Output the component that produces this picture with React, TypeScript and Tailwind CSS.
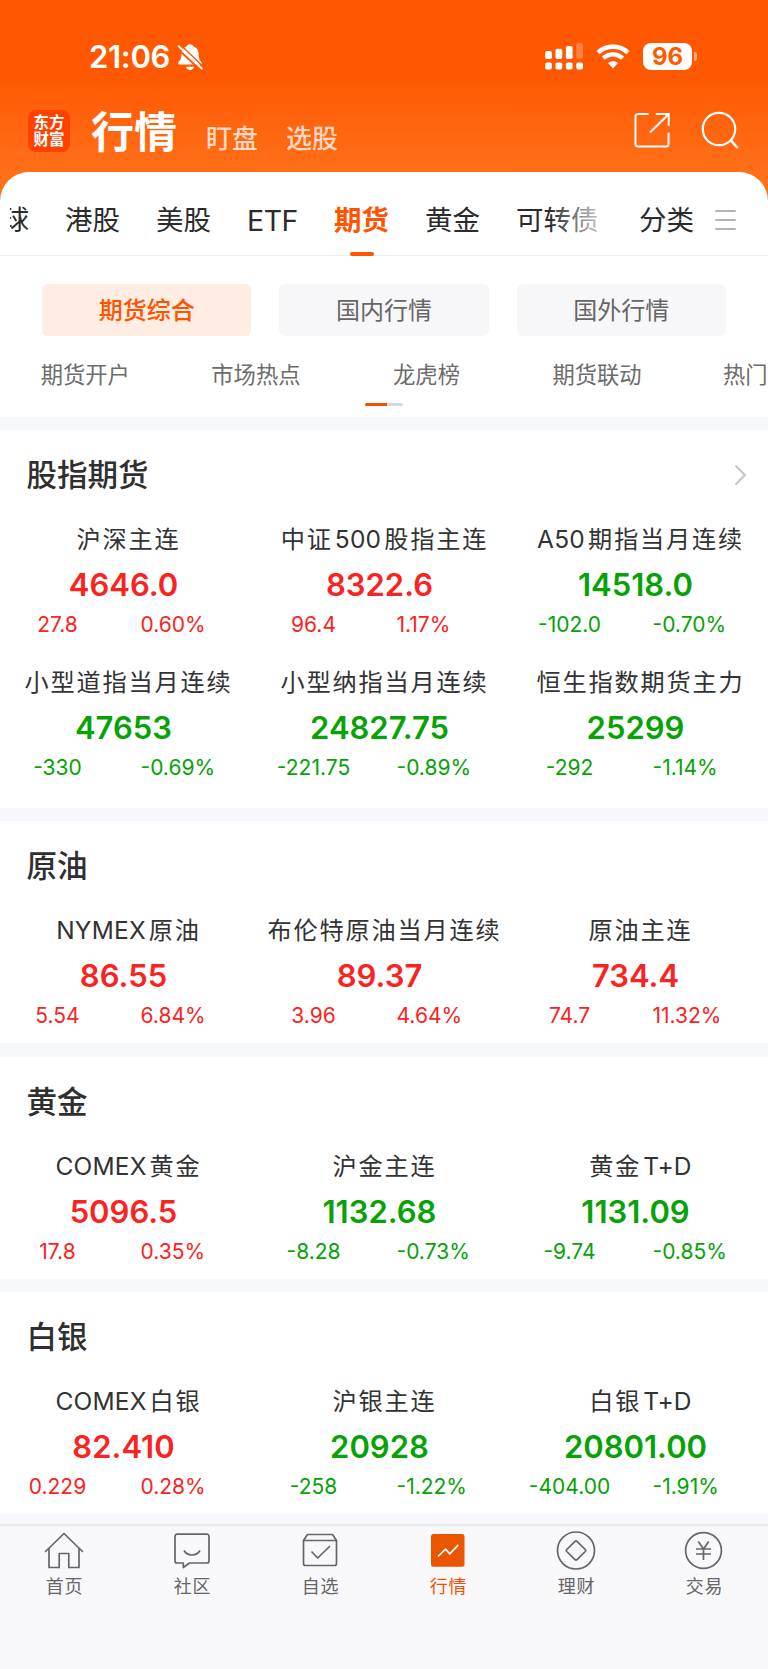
import React from "react";

type Quote = {
  name: string;
  price: string;
  change: string;
  percent: string;
};

type Section = {
  title: string;
  more?: boolean;
  quotes: Quote[];
};

const sections: Section[] = [
  {
    title: "股指期货",
    more: true,
    quotes: [
      { name: "沪深主连", price: "4646.0", change: "27.8", percent: "0.60%" },
      { name: "中证500股指主连", price: "8322.6", change: "96.4", percent: "1.17%" },
      { name: "A50期指当月连续", price: "14518.0", change: "-102.0", percent: "-0.70%" },
      { name: "小型道指当月连续", price: "47653", change: "-330", percent: "-0.69%" },
      { name: "小型纳指当月连续", price: "24827.75", change: "-221.75", percent: "-0.89%" },
      { name: "恒生指数期货主力", price: "25299", change: "-292", percent: "-1.14%" },
    ],
  },
  {
    title: "原油",
    quotes: [
      { name: "NYMEX原油", price: "86.55", change: "5.54", percent: "6.84%" },
      { name: "布伦特原油当月连续", price: "89.37", change: "3.96", percent: "4.64%" },
      { name: "原油主连", price: "734.4", change: "74.7", percent: "11.32%" },
    ],
  },
  {
    title: "黄金",
    quotes: [
      { name: "COMEX黄金", price: "5096.5", change: "17.8", percent: "0.35%" },
      { name: "沪金主连", price: "1132.68", change: "-8.28", percent: "-0.73%" },
      { name: "黄金T+D", price: "1131.09", change: "-9.74", percent: "-0.85%" },
    ],
  },
  {
    title: "白银",
    quotes: [
      { name: "COMEX白银", price: "82.410", change: "0.229", percent: "0.28%" },
      { name: "沪银主连", price: "20928", change: "-258", percent: "-1.22%" },
      { name: "白银T+D", price: "20801.00", change: "-404.00", percent: "-1.91%" },
    ],
  },
];

function StatusBar() {
  return (
    <div className="flex h-[57px] shrink-0 items-center pl-[89px] pr-[71px] text-white mt-[28px]">
      <span className="text-[31px] leading-none font-semibold tracking-[-0.3px]">21:06</span>
      <svg className="ml-[7px] h-[28px] w-[26px]" viewBox="0 0 26 28">
        <path
          d="M13 1.2c1.9 0 3.1 1 3.5 2.3 3.600 1.200 5 4.300 5.100 7.700.1 4.300 1 6 2.600 7.600 1.100 1.100.7 2.700-.9 2.700H2.700c-1.600 0-2-1.600-.9-2.700 1.600-1.600 2.500-3.300 2.600-7.600.1-3.400 1.500-6.500 5.100-7.700C9.900 2.200 11.100 1.200 13 1.200z"
          fill="#fff"
        />
        <path d="M9 23.700h8c-.3 1.900-1.900 3.200-4 3.200s-3.700-1.300-4-3.200z" fill="#fff" />
        <path d="M0 5.200 25 28.500" stroke="#ff5a01" strokeWidth="2" />
        <path d="M1.700 3.200 24.700 25.500" stroke="#fff" strokeWidth="1.900" strokeLinecap="round" />
        <path d="M3.500 1.700 26 23.500" stroke="#ff5a01" strokeWidth="1.300" />
      </svg>
      <div className="ml-auto flex items-center">
        <svg className="h-[27px] w-[39px]" viewBox="0 0 39 27" fill="#fff">
          <rect x="0.200" y="8" width="6.700" height="8" rx="1.800" />
          <rect x="10.500" y="5.800" width="6.700" height="10.200" rx="1.800" />
          <rect x="20.900" y="3" width="6.700" height="13" rx="1.800" />
          <rect x="31.300" y="0" width="6.700" height="16" rx="1.800" opacity="0.25" />
          <rect x="0.200" y="19.400" width="6.700" height="7.200" rx="1.800" />
          <rect x="10.500" y="19.400" width="6.700" height="7.200" rx="1.800" />
          <rect x="20.900" y="19.400" width="6.700" height="7.200" rx="1.800" />
          <rect x="31.300" y="19.400" width="6.700" height="7.200" rx="1.800" />
        </svg>
        <svg className="ml-[12px] h-[25px] w-[34px]" viewBox="0 0 34 25">
          <path d="M2 8.600c8.500-8 21.500-8 30 0" fill="none" stroke="#fff" strokeWidth="4.600" />
          <path d="M7.300 14.200c5.600-5 13.800-5 19.400 0" fill="none" stroke="#fff" strokeWidth="4.400" />
          <path d="M17 24.400l-5-5.300c2.800-2.600 7.200-2.600 10 0z" fill="#fff" />
        </svg>
        <div className="ml-[13px] flex h-[27px] w-[49px] items-center justify-center rounded-[8px] bg-white text-[24px] leading-none font-bold text-[#ff5a01]">
          96
        </div>
        <div className="ml-[1.500px] h-[9px] w-[3.500px] rounded-r-full bg-white/50" />
      </div>
    </div>
  );
}

function Header() {
  return (
    <div className="flex h-[86px] items-start pl-[28px] pr-[29px] pt-[24px] text-white">
      <div className="mt-[1px] flex h-[42px] w-[42px] flex-col items-center justify-center rounded-[8px] bg-[#ff4100] text-[15.500px] leading-[17px] font-bold">
        <span>东方</span>
        <span>财富</span>
      </div>
      <span className="ml-[21px] text-[43px] leading-[46px] font-bold">行情</span>
      <span className="ml-[29px] mt-[14px] text-[26px] leading-[32px] font-medium text-white/75">盯盘</span>
      <span className="ml-[28px] mt-[14px] text-[26px] leading-[32px] font-medium text-white/75">选股</span>
      <svg className="ml-auto mt-[2px] h-[38px] w-[38px]" viewBox="0 0 38 38" fill="none" stroke="#fff" strokeWidth="2">
        <path d="M15.500 3H5a2.500 2.500 0 0 0-2.500 2.500v27.500a2.500 2.500 0 0 0 2.500 2.500h28a2.500 2.500 0 0 0 2.500-2.500V21.800" />
        <path d="M22.800 3h12.900v11.800M35.500 3.200 17 21.500" />
      </svg>
      <svg className="ml-[30px] mt-[2px] h-[38px] w-[38px]" viewBox="0 0 38 38" fill="none" stroke="#fff" strokeWidth="2.200">
        <circle cx="18" cy="18" r="16.200" />
        <path d="M29.500 29l7.200 8" strokeWidth="2.600" />
      </svg>
    </div>
  );
}

function CategoryTabs() {
  return (
    <div className="flex h-[84px] border-b border-[#eeeef0] pl-[10px]">
      <div className="relative flex h-[84px] w-[608px] gap-[36px] overflow-hidden text-[27.500px] leading-[97px] whitespace-nowrap text-[#2b2b2b]">
        <span className="-ml-[8.500px]">球</span>
        <span>港股</span>
        <span>美股</span>
        <span className="w-[51px] text-[28.500px] tracking-[-0.5px]">ETF</span>
        <div className="flex flex-col items-center">
          <span className="h-[80px] font-bold text-[#ff5300]">期货</span>
          <div className="h-[4px] w-[24px] rounded-full bg-[#ff5300]" />
        </div>
        <span>黄金</span>
        <span>可转债</span>
        <div className="absolute top-0 right-0 h-[82px] w-[68px] bg-linear-to-r from-white/0 to-white" />
      </div>
      <span className="ml-[21px] text-[27.500px] leading-[97px] text-[#2b2b2b]">分类</span>
      <div className="ml-[21px] mt-[38px] flex flex-col gap-[6.500px]">
        <div className="h-[2.500px] w-[21px] rounded-full bg-[#b4b4b4]" />
        <div className="h-[2.500px] w-[21px] rounded-full bg-[#b4b4b4]" />
        <div className="h-[2.500px] w-[21px] rounded-full bg-[#b4b4b4]" />
      </div>
    </div>
  );
}

function Filters() {
  return (
    <div className="h-[161px] overflow-hidden pt-[28px]">
      <div className="grid grid-cols-3 gap-[28px] px-[42px] text-center text-[24px] leading-[54px] text-[#666]">
        <div className="h-[52px] rounded-[6px] bg-[#ffede4] font-medium text-[#ff5300]">期货综合</div>
        <div className="h-[52px] rounded-[6px] bg-[#f7f7fa]">国内行情</div>
        <div className="h-[52px] rounded-[6px] bg-[#f7f7fa]">国外行情</div>
      </div>
      <div className="flex pt-[24px] text-center text-[22.300px] leading-[30px] whitespace-nowrap text-[#6c6c6c]">
        <span className="w-[170.600px] shrink-0">期货开户</span>
        <span className="w-[170.600px] shrink-0">市场热点</span>
        <span className="w-[170.600px] shrink-0">龙虎榜</span>
        <span className="w-[170.600px] shrink-0">期货联动</span>
        <span className="w-[170.600px] shrink-0">热门品种</span>
      </div>
      <div className="mt-[13px] mx-auto flex h-[3px] w-[38px] overflow-hidden rounded-full bg-[#d5d8de]">
        <div className="w-[21.500px] bg-[#f35000]" />
      </div>
    </div>
  );
}

function QuoteName({ name }: { name: string }) {
  const parts = name.match(/[A-Z0-9+]+|[^A-Z0-9+]+/g) ?? [];
  return (
    <div className="flex h-[41px] items-center justify-center pl-[1px] whitespace-nowrap text-[24px] leading-[41px] text-[#333]">
      {parts.map((part) =>
        /[A-Z0-9]/.test(part) ? (
          <span key={part} className="mr-[3px] ml-[2px] text-[24.500px] tracking-[0.2px] first:ml-0 last:mr-0">{part}</span>
        ) : (
          <span key={part} className="text-[24.200px] tracking-[1.800px]">{part}</span>
        ),
      )}
    </div>
  );
}

function QuoteCell({ quote }: { quote: Quote }) {
  const color = quote.change.startsWith("-") ? "text-[#06a206]" : "text-[#fb2222]";
  return (
    <div className={color}>
      <QuoteName name={quote.name} />
      <div className="h-[49px] pr-[9px] text-center text-[31px] leading-[49px] font-semibold">{quote.price}</div>
      <div className="flex h-[30px] text-[21px] leading-[32px]">
        <span className="w-[115px] text-center">{quote.change}</span>
        <span className="pl-[25.500px]">{quote.percent}</span>
      </div>
    </div>
  );
}

function QuoteSection({ section }: { section: Section }) {
  return (
    <section className={section.more ? "h-[377.500px] bg-white" : "h-[222px] bg-white"}>
      <div className="flex h-[89px] items-center justify-between pl-[26.500px] pr-[21px]">
        <h2 className="text-[30.500px] leading-[89px] font-medium text-[#2f2f2f]">{section.title}</h2>
        {section.more && (
          <svg className="h-[22px] w-[13px]" viewBox="0 0 13 22" fill="none" stroke="#c9c9c9" strokeWidth="2.200">
            <path d="M1.500 1.500 11 11 1.500 20.500" />
          </svg>
        )}
      </div>
      <div className="grid grid-cols-3 gap-y-[23px]">
        {section.quotes.map((quote) => (
          <QuoteCell key={quote.name} quote={quote} />
        ))}
      </div>
    </section>
  );
}

const navItems = [
  {
    label: "首页",
    icon: (
      <path d="M1 21 20 2.500 39 21M5 17.500V36.500H15.200V22.500H24.800V36.500H35V17.500" />
    ),
  },
  {
    label: "社区",
    icon: (
      <>
        <path d="M5 3.200h30a2 2 0 0 1 2 2V30a2 2 0 0 1-2 2H17.500L11.300 36.500V32H5a2 2 0 0 1-2-2V5.200a2 2 0 0 1 2-2z" />
        <path d="M12 19.500c3.500 6 12.500 6 16 0" />
      </>
    ),
  },
  {
    label: "自选",
    icon: (
      <>
        <path d="M3.500 9.500 7.500 3.500h25L36.500 9.500V32.500a2 2 0 0 1-2 2h-29a2 2 0 0 1-2-2zM3.500 9.500h33" />
        <path d="M11.500 20.500l6.200 6.500L30 15" />
      </>
    ),
  },
  {
    label: "行情",
    active: true,
    icon: (
      <>
        <rect x="3" y="3" width="33.500" height="32.800" rx="2.500" fill="#eb5500" stroke="none" />
        <path d="M10 25.500l7.500-7.300 4.300 4.600 8.500-9" stroke="#fff" />
      </>
    ),
  },
  {
    label: "理财",
    icon: (
      <>
        <circle cx="20" cy="19.500" r="18.500" />
        <path d="M19 10.300a1.400 1.400 0 0 1 2 0l8.300 8.200a1.400 1.400 0 0 1 0 2L21 28.700a1.400 1.400 0 0 1-2 0l-8.300-8.200a1.400 1.400 0 0 1 0-2z" />
      </>
    ),
  },
  {
    label: "交易",
    icon: (
      <>
        <circle cx="19.500" cy="19.500" r="17.900" />
        <path d="M14.300 10.500l5.200 7.500 5.200-7.500M12 18h15M12 23h15M19.500 18v11" />
      </>
    ),
  },
];

function BottomNav() {
  return (
    <nav className="grid h-[145px] grid-cols-6 border-t-2 border-[#e9eaed] bg-[#f8f8fb]">
      {navItems.map((item) => (
        <div
          key={item.label}
          className={
            item.active
              ? "flex flex-col items-center pt-[5.500px] text-[#f35000]"
              : "flex flex-col items-center pt-[5.500px] text-[#666]"
          }
        >
          <svg className="h-[40px] w-[40px] shrink-0" viewBox="0 0 40 40" fill="none" stroke="currentColor" strokeWidth="1.700" strokeLinejoin="round">
            {item.icon}
          </svg>
          <span className="mt-[3.500px] pl-[1px] text-[18px] leading-[24px] tracking-[0.7px]">{item.label}</span>
        </div>
      ))}
    </nav>
  );
}

export default function App() {
  return (
    <div className="flex h-[1669px] w-[768px] flex-col overflow-hidden bg-[#f6f8fb] font-['Inter','Noto_Sans_CJK_SC',sans-serif]">
      <div className="flex h-[210px] shrink-0 flex-col bg-linear-to-b from-[#ff5800] from-35% to-[#ff7019] to-85%">
        <StatusBar />
        <Header />
      </div>
      <div className="-mt-[38.500px] shrink-0 rounded-t-[29px] bg-white">
        <CategoryTabs />
        <Filters />
      </div>
      <main className="mt-[13.500px] flex h-[1093.500px] shrink-0 flex-col gap-[13.500px]">
        {sections.map((section) => (
          <QuoteSection key={section.title} section={section} />
        ))}
      </main>
      <BottomNav />
    </div>
  );
}
